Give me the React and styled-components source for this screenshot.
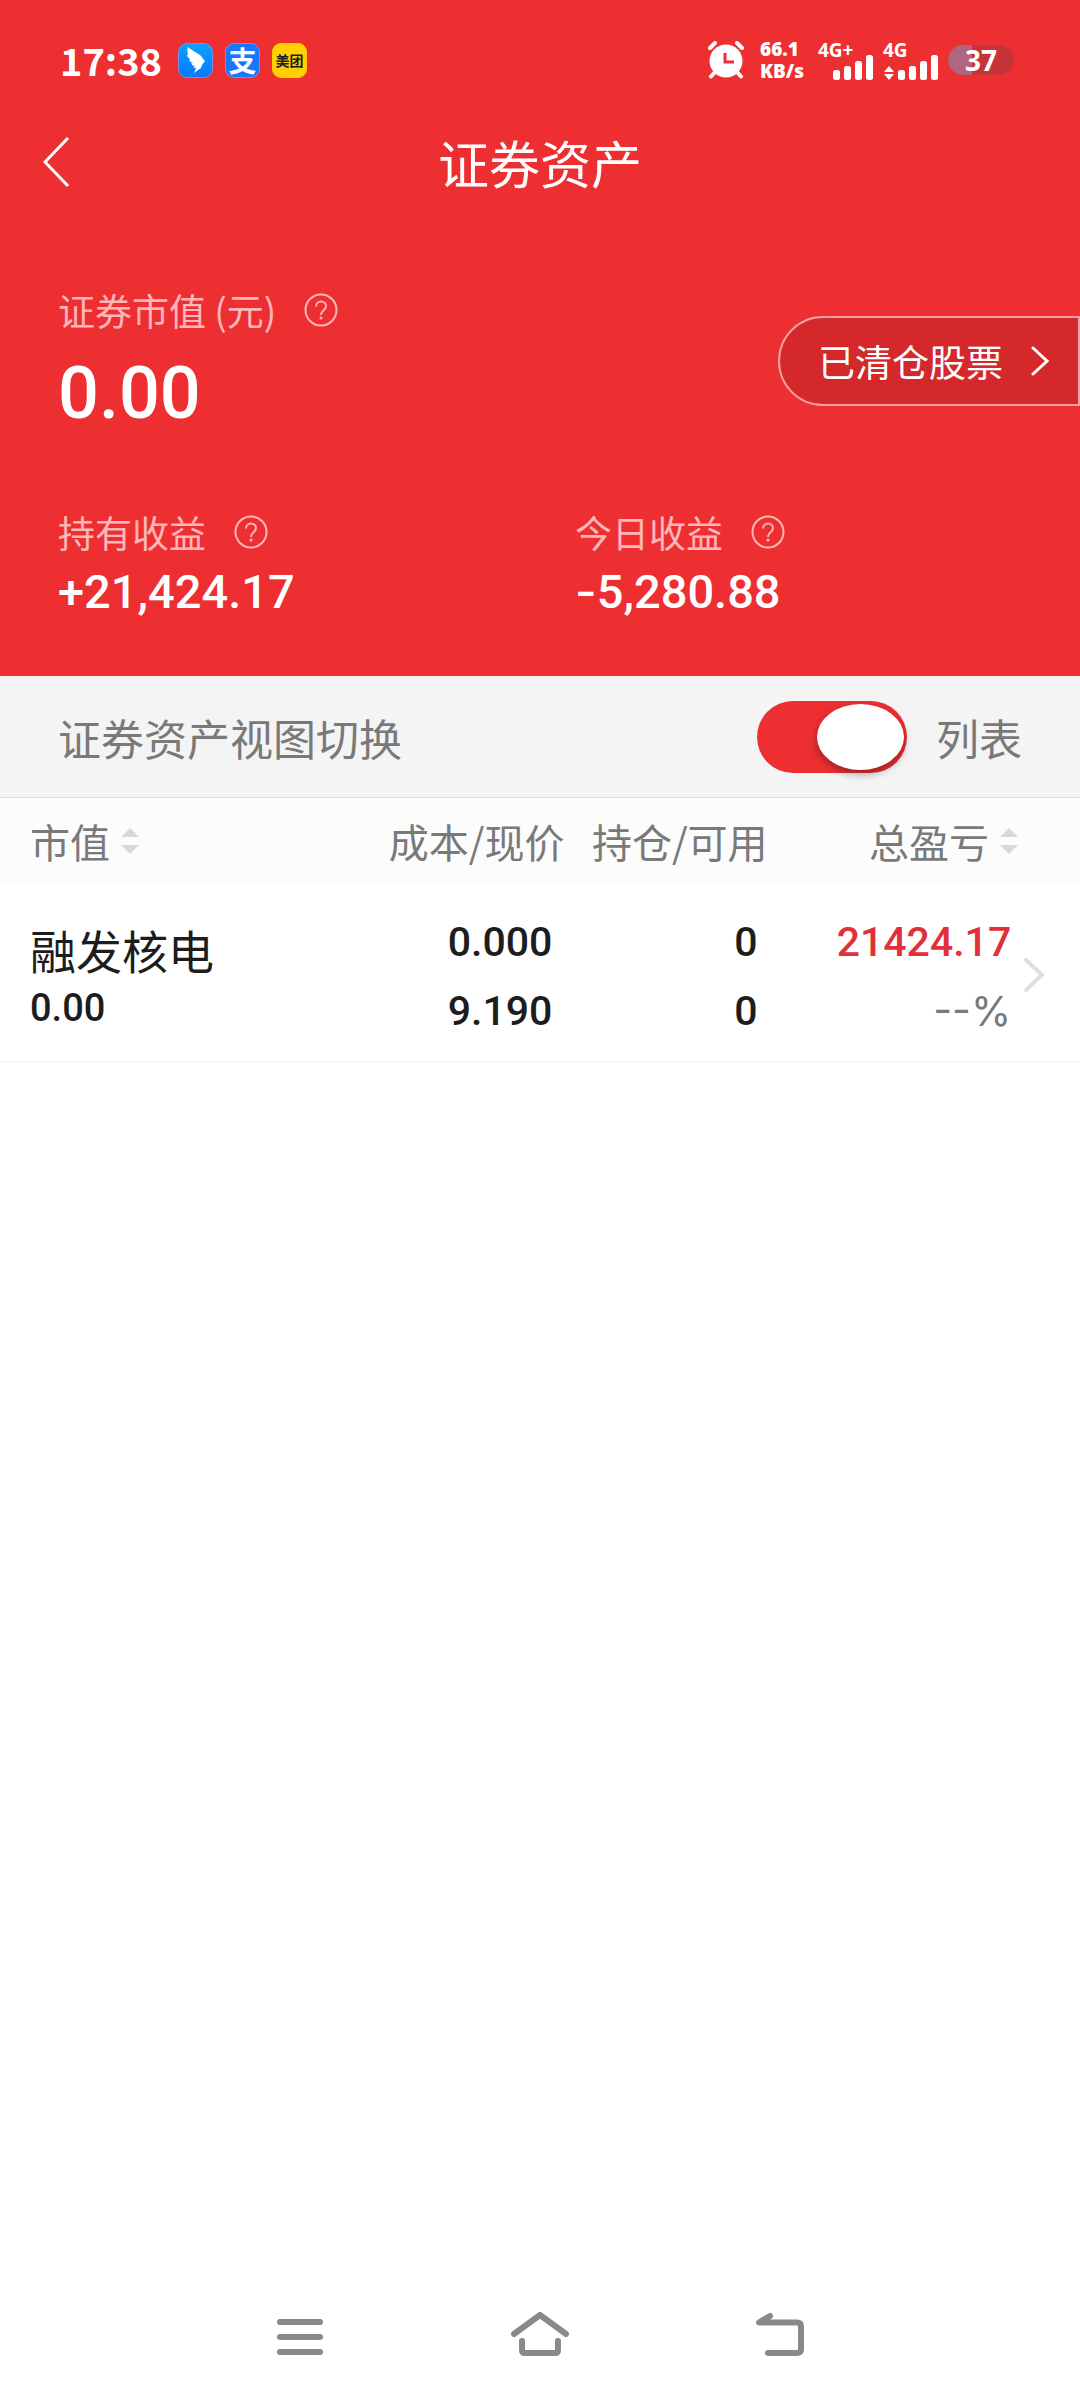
import React, { useState } from "react";
import styled, { createGlobalStyle } from "styled-components";

const CJK = '"Noto Sans CJK SC", "Noto Sans", sans-serif';
const NUM = 'Roboto, "Noto Sans CJK SC", sans-serif';
const RED = "#ed2f32";

const GlobalStyle = createGlobalStyle`
  * { box-sizing: border-box; }
  body { margin: 0; background: #fff; font-family: ${CJK}; }
  button { border: 0; padding: 0; background: none; color: inherit; font: inherit; cursor: pointer; }
  a { color: inherit; text-decoration: none; }
  svg { display: block; flex: none; }
`;

const Page = styled.div`
  display: flex;
  flex-direction: column;
  min-height: 100vh;
`;

const Hero = styled.header`
  background: ${RED};
  color: #fff;
  padding-bottom: 52px;
`;

const StatusBar = styled.div`
  display: flex;
  justify-content: space-between;
  align-items: center;
  height: 120px;
  padding: 0 66px 0 60px;
`;

const StatusGroup = styled.div`
  display: flex;
  align-items: center;
`;

const Clock = styled.time`
  font-size: 38px;
  line-height: 44px;
  font-weight: 700;
  margin-right: 16px;
`;

const AppBadge = styled.span`
  display: flex;
  align-items: center;
  justify-content: center;
  width: 35px;
  height: 35px;
  margin-right: 12px;
  border-radius: 9px;
  background: ${(p) => p.$bg};
  color: ${(p) => p.$color || "#fff"};
  border: 1px solid ${(p) => p.$edge};
  font-size: ${(p) => p.$size || 14}px;
  line-height: 32px;
  font-weight: 700;
`;

const Speed = styled.div`
  display: flex;
  flex-direction: column;
  width: 58px;
  margin-left: 15px;
  font: 800 19px/22px "Open Sans", "Noto Sans", sans-serif;
`;

const Signal = styled.div`
  display: flex;
  flex-direction: column;
  width: 55px;
  margin-right: 10px;
  font: 700 19px/18px "Noto Sans", sans-serif;
`;

const Bars = styled.svg`
  align-self: flex-end;
  margin-top: -5px;
`;

const Battery = styled.div`
  display: flex;
  align-items: center;
  justify-content: center;
  width: 66px;
  height: 30px;
  border-radius: 15px;
  background: linear-gradient(90deg, #b0667f 37%, #c53439 37%);
  font: 700 28px/30px "Noto Sans", sans-serif;
`;

const TitleBar = styled.div`
  display: grid;
  grid-template-columns: 1fr auto 1fr;
  align-items: center;
  height: 84px;
  padding: 0 43px;
`;

const Title = styled.h1`
  margin: 0;
  font-size: 51px;
  line-height: 60px;
  font-weight: 400;
`;

const Summary = styled.section`
  display: flex;
  justify-content: space-between;
  align-items: center;
  height: 226px;
  margin-top: 44px;
  padding-left: 58px;
`;

const Label = styled.div`
  display: flex;
  align-items: center;
  gap: 28px;
  color: #ffb6b9;
  font-size: 37px;
  line-height: 44px;
`;

const Total = styled.div`
  margin-top: 22px;
  font: 500 72px/80px ${NUM};
`;

const ClearedButton = styled.button`
  display: flex;
  align-items: center;
  gap: 28px;
  height: 90px;
  padding: 0 29px 0 38px;
  border: 2px solid #f5a0a3;
  border-radius: 45px 0 0 45px;
  background: #d4282b;
  font-size: 37px;
  line-height: 44px;
`;

const Gains = styled.section`
  display: grid;
  grid-template-columns: 517fr 505fr;
  margin-top: 36px;
  padding-left: 58px;
`;

const Amount = styled.div`
  margin-top: 10px;
  height: 60px;
  font: 500 47px/56px ${NUM};
`;

const Dash = styled.span`
  font-family: Inter, sans-serif;
  line-height: 1;
`;

const SwitchBar = styled.section`
  display: flex;
  align-items: center;
  justify-content: space-between;
  height: 122px;
  padding: 0 58px;
  border-bottom: 1px solid #efdad8;
  background: #f4f4f4;
  color: #797979;
  font-size: 43px;
  line-height: 52px;
`;

const SwitchLabel = styled.label`
  display: flex;
  align-items: center;
  gap: 29px;
`;

const Toggle = styled.input`
  appearance: none;
  display: flex;
  align-items: center;
  justify-content: ${(p) => (p.checked ? "flex-end" : "flex-start")};
  width: 150px;
  height: 72px;
  margin: 0;
  padding: 3px;
  border-radius: 36px;
  background: ${(p) => (p.checked ? RED : "#ccc")};
  cursor: pointer;
  overflow: visible;
  &::before {
    content: "";
    width: 87px;
    height: 66px;
    border-radius: 50%;
    background: #fff;
    box-shadow: 0 4px 8px rgba(0, 0, 0, 0.35);
  }
`;

const Table = styled.table`
  width: 100%;
  table-layout: fixed;
  border-collapse: collapse;
`;

const HeadRow = styled.tr`
  height: 86px;
  background: #fcfcfc;
  color: #797979;
`;

const Th = styled.th`
  padding: 0 ${(p) => p.$right || 0}px 0 ${(p) => p.$left || 0}px;
  text-align: ${(p) => (p.$left ? "left" : "right")};
  font-size: 40px;
  line-height: 48px;
  font-weight: 400;
  white-space: nowrap;
`;

const SortButton = styled.button`
  display: inline-flex;
  align-items: center;
  gap: 11px;
`;

const Row = styled.tr`
  height: 178px;
  border-bottom: 2px solid #f5f5f5;
  color: #1d1d1d;
`;

const NameCell = styled.td`
  padding: 12px 0 0 30px;
`;

const StockName = styled.div`
  font-size: 46px;
  line-height: 58px;
`;

const StockValue = styled.div`
  font: 500 38px/60px ${NUM};
`;

const NumCell = styled.td`
  padding: 8px ${(p) => p.$right}px 0 0;
  text-align: right;
  font: 500 41px/69px ${NUM};
`;

const Gain = styled.div`
  color: #e2303a;
`;

const Percent = styled.div`
  color: #797979;
  font-family: Inter, sans-serif;
  font-weight: 400;
`;

const LinkCell = styled.td`
  padding: 4px 0 0 3px;
`;

const NavBar = styled.nav`
  display: flex;
  justify-content: center;
  gap: 180px;
  margin-top: auto;
  padding-bottom: 36px;
`;

const NavButton = styled.button`
  display: flex;
  justify-content: center;
  align-items: center;
  width: 60px;
  height: 60px;
`;

function Help({ about }) {
  return (
    <button aria-label={about}>
      <svg width="34" height="34" viewBox="0 0 34 34" fill="none" stroke="currentColor" strokeWidth="2">
        <circle cx="17" cy="17" r="15.5" />
        <path d="M12 13.5c0-3 2.200-5 5-5s5 2 5 4.600c0 2-1 3-2.600 4.400C17.800 18.800 17 19.600 17 22" />
        <circle cx="17" cy="25" r="1.500" fill="currentColor" stroke="none" />
      </svg>
    </button>
  );
}

function SortArrows() {
  return (
    <svg width="18" height="26" viewBox="0 0 18 26" fill="#d8d8d8">
      <path d="M9 0l9 9H0zM0 17h18l-9 9z" />
    </svg>
  );
}

function SignalBars({ arrows }) {
  return (
    <Bars width="55" height="26" viewBox="0 0 55 26" fill="#fff">
      {arrows && <path d="M6 12l5 6H1zM1 20h10l-5 6z" />}
      <rect x="15" y="16" width="7" height="10" rx="2.500" />
      <rect x="26" y="12" width="7" height="14" rx="2.500" />
      <rect x="37" y="7" width="7" height="19" rx="2.500" />
      <rect x="48" y="1" width="7" height="25" rx="2.500" />
    </Bars>
  );
}

function AlarmIcon() {
  return (
    <svg width="38" height="38" viewBox="0 0 38 38" fill="none" strokeLinecap="round">
      <path d="M3 7l5-5M35 7l-5-5" stroke="#fff" strokeWidth="4" />
      <path d="M8 31l-4 4.500M30 31l4 4.500" stroke="#fff" strokeWidth="4" />
      <circle cx="19" cy="20" r="16.500" fill="#fff" />
      <path d="M18 12v9h9" stroke={RED} strokeWidth="3" strokeLinecap="butt" />
    </svg>
  );
}

export default function App() {
  const [listView, setListView] = useState(true);
  return (
    <Page>
      <GlobalStyle />
      <Hero>
        <StatusBar>
          <StatusGroup>
            <Clock>17:38</Clock>
            <AppBadge $bg="linear-gradient(#0aa2ff, #0a78fd)" $edge="#7a8fe0">
              <svg width="20" height="28" viewBox="0 0 20 28" fill="#fff">
                <path d="M2 1c3 3 8 5 12 8 2 1.500 2.500 3.500 4 5l1 1-3 4-1 3-7 5 2-5-3-.5 2-1.500c-2 0-3-1-4-2.500l2-.3c-2-.7-3.500-2-4-4l2 .3C2 12 1 10.500 1 8l1.500 1C1 6 1 3.500 2 1z" />
              </svg>
            </AppBadge>
            <AppBadge $bg="#1777ff" $edge="#7a8fe0" $size={28}>支</AppBadge>
            <AppBadge $bg="#ffd100" $edge="#ffd100" $color="#1d1d1d">美团</AppBadge>
          </StatusGroup>
          <StatusGroup>
            <AlarmIcon />
            <Speed><span>66.1</span><span>KB/s</span></Speed>
            <Signal>4G+<SignalBars /></Signal>
            <Signal>4G<SignalBars arrows /></Signal>
            <Battery>37</Battery>
          </StatusGroup>
        </StatusBar>
        <TitleBar>
          <button aria-label="返回">
            <svg width="27" height="50" viewBox="0 0 27 50" fill="none" stroke="#fff" strokeWidth="3">
              <path d="M25 1L2 25l23 24" />
            </svg>
          </button>
          <Title>证券资产</Title>
        </TitleBar>
        <Summary>
          <div>
            <Label>证券市值 (元)<Help about="证券市值说明" /></Label>
            <Total>0.00</Total>
          </div>
          <ClearedButton>
            已清仓股票
            <svg width="18" height="30" viewBox="0 0 18 30" fill="none" stroke="#fff" strokeWidth="3" strokeLinecap="round">
              <path d="M2 2l14 13L2 28" />
            </svg>
          </ClearedButton>
        </Summary>
        <Gains>
          <div>
            <Label>持有收益<Help about="持有收益说明" /></Label>
            <Amount>+21,424.17</Amount>
          </div>
          <div>
            <Label>今日收益<Help about="今日收益说明" /></Label>
            <Amount><Dash>-</Dash>5,280.88</Amount>
          </div>
        </Gains>
      </Hero>
      <SwitchBar>
        <span>证券资产视图切换</span>
        <SwitchLabel>
          <Toggle type="checkbox" role="switch" checked={listView} onChange={(e) => setListView(e.target.checked)} />
          列表
        </SwitchLabel>
      </SwitchBar>
      <Table>
        <colgroup>
          <col />
          <col style={{ width: "20%" }} />
          <col style={{ width: "19%" }} />
          <col style={{ width: "22%" }} />
          <col style={{ width: "6%" }} />
        </colgroup>
        <thead>
          <HeadRow>
            <Th $left={30}><SortButton>市值<SortArrows /></SortButton></Th>
            <Th $right={8}>成本/现价</Th>
            <Th $right={10}>持仓/可用</Th>
            <Th $right={62} colSpan={2}><SortButton>总盈亏<SortArrows /></SortButton></Th>
          </HeadRow>
        </thead>
        <tbody>
          <Row>
            <NameCell>
              <StockName>融发核电</StockName>
              <StockValue>0.00</StockValue>
            </NameCell>
            <NumCell $right={20}>0.000<br />9.190</NumCell>
            <NumCell $right={20}>0<br />0</NumCell>
            <NumCell $right={4}>
              <Gain>21424.17</Gain>
              <Percent>--%</Percent>
            </NumCell>
            <LinkCell>
              <a href="#detail" aria-label="融发核电">
                <svg width="26" height="36" viewBox="0 0 26 36" fill="none" stroke="#dedede" strokeWidth="4" strokeLinecap="round">
                  <path d="M8 3l16 15L8 33" />
                </svg>
              </a>
            </LinkCell>
          </Row>
        </tbody>
      </Table>
      <NavBar>
        <NavButton aria-label="菜单">
          <svg width="46" height="42" viewBox="0 0 46 42" fill="none" stroke="#898989" strokeWidth="6" strokeLinecap="round">
            <path d="M3 9h40M3 24h40M3 39h40" />
          </svg>
        </NavButton>
        <NavButton aria-label="主页">
          <svg width="58" height="44" viewBox="0 0 58 44" fill="none" stroke="#898989" strokeWidth="6" strokeLinecap="round" strokeLinejoin="round">
            <path d="M3 22L29 3l26 19M11 29v9q0 3 3 3h30q3 0 3-3v-9" />
          </svg>
        </NavButton>
        <NavButton aria-label="后退">
          <svg width="48" height="44" viewBox="0 0 48 44" fill="none" stroke="#898989" strokeWidth="6" strokeLinecap="round" strokeLinejoin="round">
            <path d="M14 4L3 10.500h38q4 0 4 4V37q0 4-4 4H12" />
          </svg>
        </NavButton>
      </NavBar>
    </Page>
  );
}
